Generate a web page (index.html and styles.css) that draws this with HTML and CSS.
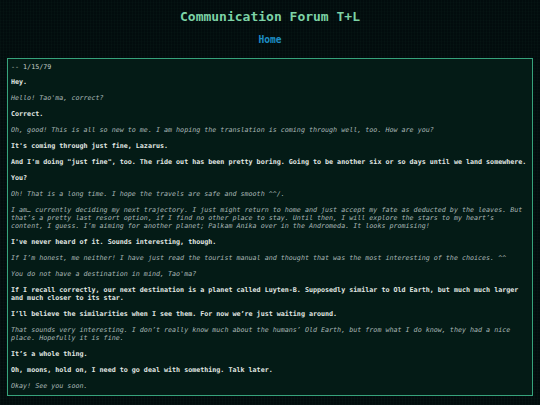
FILE: index.html
```html
<!DOCTYPE html>
<html>
<head>
<meta charset="utf-8">
<link rel="stylesheet" href="styles.css">
</head>
<body>
<header class="top">
  <h1 class="title">Communication Forum T+L</h1>
  <nav class="nav"><a class="home" href="#">Home</a></nav>
</header>
<main class="log">
  <div class="date">-- 1/15/79</div>
  <p class="l">Hey.</p>
  <p class="t">Hello! Tao'ma, correct?</p>
  <p class="l">Correct.</p>
  <p class="t">Oh, good! This is all so new to me. I am hoping the translation is coming through well, too. How are you?</p>
  <p class="l">It's coming through just fine, Lazarus.</p>
  <p class="l">And I'm doing "just fine", too. The ride out has been pretty boring. Going to be another six or so days until we land somewhere.</p>
  <p class="l">You?</p>
  <p class="t">Oh! That is a long time. I hope the travels are safe and smooth ^^/.</p>
  <p class="t">I am… currently deciding my next trajectory. I just might return to home and just accept my fate as deducted by the leaves. But that’s a pretty last resort option, if I find no other place to stay. Until then, I will explore the stars to my heart’s content, I guess. I’m aiming for another planet; Palkam Anika over in the Andromeda. It looks promising!</p>
  <p class="l">I've never heard of it. Sounds interesting, though.</p>
  <p class="t">If I’m honest, me neither! I have just read the tourist manual and thought that was the most interesting of the choices. ^^</p>
  <p class="t">You do not have a destination in mind, Tao'ma?</p>
  <p class="l">If I recall correctly, our next destination is a planet called Luyten-B. Supposedly similar to Old Earth, but much much larger and much closer to its star.</p>
  <p class="l">I’ll believe the similarities when I see them. For now we’re just waiting around.</p>
  <p class="t">That sounds very interesting. I don’t really know much about the humans’ Old Earth, but from what I do know, they had a nice place. Hopefully it is fine.</p>
  <p class="l">It’s a whole thing.</p>
  <p class="l">Oh, moons, hold on, I need to go deal with something. Talk later.</p>
  <p class="t">Okay! See you soon.</p>
</main>
</body>
</html>
```

FILE: styles.css
```css
html, body {
  margin: 0;
  padding: 0;
}
body {
  width: 540px;
  height: 405px;
  overflow: hidden;
  background-color: #020c0d;
  background-image:
    repeating-linear-gradient(90deg, rgba(40, 90, 70, 0.06) 0 1px, transparent 1px 3px),
    repeating-linear-gradient(0deg, rgba(40, 90, 70, 0.04) 0 1px, transparent 1px 3px);
  font-family: "DejaVu Sans Mono", monospace;
  padding: 0 7px;
  box-sizing: border-box;
}
.top {
  text-align: center;
  padding-top: 9px;
}
.title {
  margin: 0;
  font-size: 13px;
  line-height: 16px;
  font-weight: bold;
  color: #7dd3a6;
}
.nav {
  margin-top: 7px;
  line-height: 12px;
}
.home {
  font-size: 9.6px;
  font-weight: bold;
  color: #1d8ec6;
  text-decoration: none;
}
.log {
  margin-top: 12px;
  border: 1px solid #37a37c;
  background: #041b16;
  padding: 4px 3px 5px 3px;
  font-size: 6.7px;
  line-height: 8px;
}
.date {
  color: #c4cec9;
  margin-bottom: 7px;
}
.log p {
  margin: 0 0 8px 0;
}
.log p:last-child {
  margin-bottom: 0;
}
.l {
  font-weight: bold;
  color: #e2e8e4;
}
.t {
  font-style: italic;
  color: #aab8b6;
}
```
